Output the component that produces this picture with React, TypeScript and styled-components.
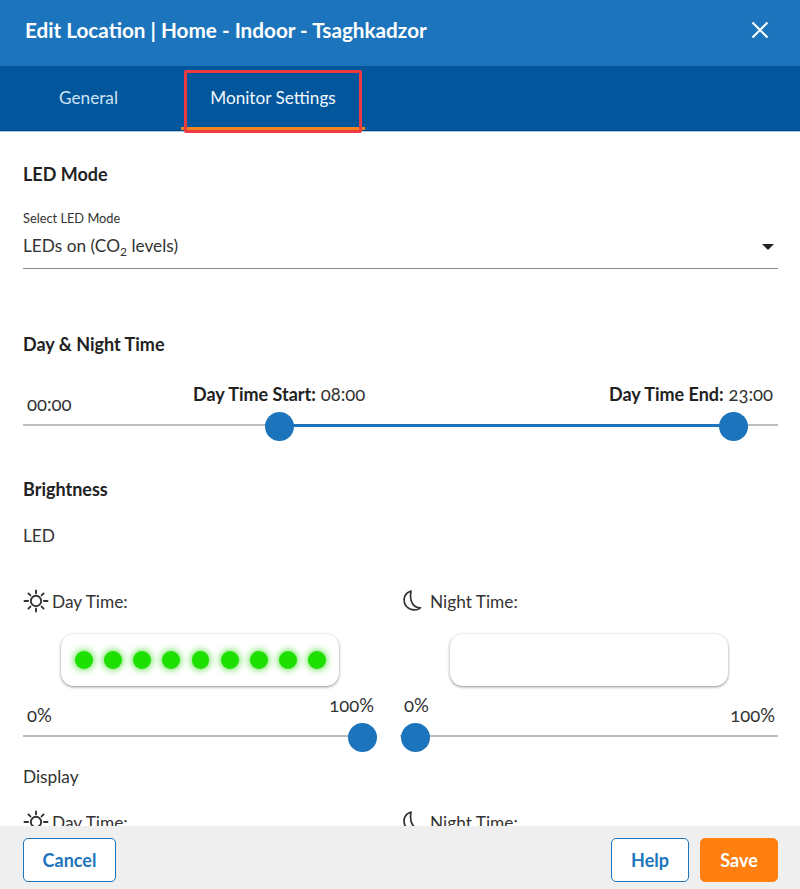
import React from "react";
import styled, { createGlobalStyle } from "styled-components";

const Global = createGlobalStyle`
  html, body { margin: 0; padding: 0; background: #fff; }
  body { font-family: "Lato", "Noto Sans", sans-serif; color: #222; }
  * { box-sizing: border-box; }
`;

const Page = styled.div`
  position: relative;
  width: 800px;
  height: 889px;
  display: flex;
  flex-direction: column;
  overflow: hidden;
`;
const Header = styled.header`
  flex: 0 0 66px;
  background: #1c75bc;
  color: #fff;
  display: flex;
  align-items: center;
  justify-content: space-between;
  padding: 0 31px 6px 25px;
`;
const Title = styled.h1`
  margin: 0;
  font-size: 20.7px;
  font-weight: 700;
`;
const Close = styled.button`
  display: flex;
  border: 0;
  padding: 0;
  background: none;
  color: #fff;
`;
const Tabs = styled.nav`
  flex: 0 0 65px;
  background: #02569b;
  display: flex;
  border-bottom: 1px solid #01437c;
  box-shadow: 0 1px 0 #a9cbe8;
  position: relative;
`;
const Tab = styled.div<{ $active?: boolean; $w: number }>`
  width: ${(p) => p.$w}px;
  display: flex;
  align-items: center;
  justify-content: center;
  color: ${(p) => (p.$active ? "#f2f8fd" : "#cfe3f3")};
  font-size: 17.2px;
  padding-top: 2px;
  border-bottom: 3px solid ${(p) => (p.$active ? "#f5821f" : "transparent")};
  margin-left: ${(p) => (p.$active ? "4px" : "0")};
`;
const Highlight = styled.div`
  position: absolute;
  left: 184px;
  top: 70px;
  width: 178px;
  height: 63px;
  border: 3px solid #ee3a43;
  border-radius: 2px;
`;
const Body = styled.main`
  flex: 1;
  min-height: 0;
  overflow: hidden;
  padding: 0 22px 0 23px;
`;
const Heading = styled.h2<{ $top: number; $bottom: number }>`
  margin: ${(p) => p.$top}px 0 ${(p) => p.$bottom}px;
  font-size: 18px;
  line-height: 22px;
  font-weight: 700;
  color: #222;
`;
const SelectLabel = styled.div`
  font-size: 12.8px;
  line-height: 16px;
  color: #333;
`;
const SelectBox = styled.div`
  height: 37px;
  margin-top: 6px;
  border-bottom: 1px solid #8c8c8c;
  display: flex;
  justify-content: space-between;
  padding: 2px 4px 0 0;
  font-size: 17.3px;
  line-height: 24px;
  color: #333;
  sub { font-size: 12px; line-height: 0; }
`;
const Arrow = styled.span`
  margin-top: 10px;
  width: 0;
  height: 0;
  border-left: 6px solid transparent;
  border-right: 6px solid transparent;
  border-top: 6px solid #222;
`;
const Slider = styled.div<{ $height: number }>`
  position: relative;
  height: ${(p) => p.$height}px;
`;
const Track = styled.div`
  position: absolute;
  left: 0;
  right: 0;
  bottom: 14px;
  height: 2px;
  background: #bdbdbd;
`;
const Fill = styled.div`
  position: absolute;
  bottom: 13px;
  height: 3px;
  background: #1c75bc;
`;
const Thumb = styled.div`
  position: absolute;
  bottom: -1px;
  width: 29px;
  height: 29px;
  border-radius: 50%;
  background: #1c75bc;
`;
const SliderLabel = styled.span<{ $up?: boolean }>`
  position: absolute;
  bottom: ${(p) => (p.$up ? 36 : 26)}px;
  font-size: 18.5px;
  line-height: 20px;
  color: #333;
  white-space: nowrap;
  font-variant-numeric: oldstyle-nums;
  b { font-size: 18px; font-weight: 700; color: #222; }
`;
const SubLabel = styled.div<{ $top: number; $bottom: number }>`
  margin: ${(p) => p.$top}px 0 ${(p) => p.$bottom}px;
  font-size: 17.3px;
  line-height: 22px;
  color: #333;
`;
const Columns = styled.div`
  display: grid;
  grid-template-columns: 354px 378px;
  column-gap: 23px;
`;
const Column = styled.div``;
const TimeLabel = styled.div<{ $gap: number }>`
  height: 26px;
  display: flex;
  align-items: center;
  gap: ${(p) => p.$gap}px;
  font-size: 17.3px;
  color: #333;
`;
const LedPanel = styled.div<{ $offset: number }>`
  width: 278px;
  height: 52px;
  margin: 20px 0 0 ${(p) => p.$offset}px;
  border-radius: 13px;
  background: #fff;
  box-shadow: 0 1px 3px rgba(0, 0, 0, 0.45);
  display: flex;
  align-items: center;
  gap: 11.2px;
  padding: 0 13px 0 14px;
`;
const Led = styled.span`
  width: 18px;
  height: 18px;
  border-radius: 50%;
  background: #1ee000;
  box-shadow: 0 0 7px 1px #5fe04a;
`;
const Footer = styled.footer`
  flex: 0 0 63px;
  background: #efefef;
  display: flex;
  align-items: flex-start;
  padding: 12px 22px 0 23px;
  gap: 11px;
`;
const Button = styled.button<{ $primary?: boolean; $w: number }>`
  width: ${(p) => p.$w}px;
  height: 44px;
  border-radius: 5px;
  border: 1px solid ${(p) => (p.$primary ? "#ff7f11" : "#1c75bc")};
  background: ${(p) => (p.$primary ? "#ff7f11" : "#fff")};
  color: ${(p) => (p.$primary ? "#fff" : "#1c75bc")};
  font: 700 18px "Lato", sans-serif;
`;
const Spacer = styled.div`
  flex: 1;
`;

const SunIcon = () => (
  <svg width="26" height="26" viewBox="0 0 26 26" fill="none" stroke="#333" strokeWidth="1.9" strokeLinecap="round">
    <circle cx="13" cy="13" r="5.2" />
    <path d="M13 2.500v2.800M13 20.700v2.800M1.500 13h3.600M20.900 13h3.600M5.400 5.400l2 2M18.600 18.600l2 2M5.400 20.600l2-2M18.600 7.400l2-2" />
  </svg>
);
const MoonIcon = () => (
  <svg width="24" height="26" viewBox="0 0 24 26" fill="none" stroke="#333" strokeWidth="1.7" strokeLinejoin="round">
    <path d="M11 3C5 5 3 10 4.500 15c1.500 5 7.500 8 13 6.500 1.500-.5 2.500-1 3-1.700C14 20 9 14.500 11 3z" />
  </svg>
);

const LedBlock = ({ night }: { night?: boolean }) => (
  <LedPanel $offset={night ? 50 : 38}>
    {!night && Array.from({ length: 9 }, (_, i) => <Led key={i} />)}
  </LedPanel>
);

export default function App() {
  return (
    <Page>
      <Global />
      <Header>
        <Title>Edit Location | Home - Indoor - Tsaghkadzor</Title>
        <Close aria-label="Close">
          <svg width="18" height="18" viewBox="0 0 18 18" stroke="currentColor" strokeWidth="2">
            <path d="M1.500 1.500l15 15M16.500 1.500l-15 15" />
          </svg>
        </Close>
      </Header>
      <Tabs>
        <Tab $w={177}>General</Tab>
        <Tab $w={184} $active>Monitor Settings</Tab>
      </Tabs>
      <Highlight />
      <Body>
        <Heading $top={32} $bottom={25}>LED Mode</Heading>
        <SelectLabel>Select LED Mode</SelectLabel>
        <SelectBox>
          <span>LEDs on (CO<sub>2</sub> levels)</span>
          <Arrow />
        </SelectBox>
        <Heading $top={64} $bottom={0}>Day &amp; Night Time</Heading>
        <Slider $height={85}>
          <Track />
          <Fill style={{ left: 256, width: 454 }} />
          <SliderLabel style={{ left: 4 }}>00:00</SliderLabel>
          <SliderLabel $up style={{ left: 170 }}><b>Day Time Start:</b> 08:00</SliderLabel>
          <SliderLabel $up style={{ right: 5 }}><b>Day Time End:</b> 23:00</SliderLabel>
          <Thumb style={{ left: 242 }} />
          <Thumb style={{ left: 696 }} />
        </Slider>
        <Heading $top={38} $bottom={25}>Brightness</Heading>
        <SubLabel $top={0} $bottom={41}>LED</SubLabel>
        <Columns>
          <Column>
            <TimeLabel $gap={3}><SunIcon /> Day Time:</TimeLabel>
            <LedBlock />
            <Slider $height={65}>
              <Track />
              <SliderLabel style={{ left: 4 }}>0%</SliderLabel>
              <SliderLabel $up style={{ right: 3 }}>100%</SliderLabel>
              <Thumb style={{ right: 0 }} />
            </Slider>
          </Column>
          <Column>
            <TimeLabel $gap={6}><MoonIcon /> Night Time:</TimeLabel>
            <LedBlock night />
            <Slider $height={65}>
              <Track />
              <SliderLabel $up style={{ left: 4 }}>0%</SliderLabel>
              <SliderLabel style={{ right: 3 }}>100%</SliderLabel>
              <Thumb style={{ left: 1 }} />
            </Slider>
          </Column>
        </Columns>
        <SubLabel $top={15} $bottom={21}>Display</SubLabel>
        <Columns>
          <Column><TimeLabel $gap={3}><SunIcon /> Day Time:</TimeLabel></Column>
          <Column><TimeLabel $gap={6}><MoonIcon /> Night Time:</TimeLabel></Column>
        </Columns>
      </Body>
      <Footer>
        <Button $w={93}>Cancel</Button>
        <Spacer />
        <Button $w={78}>Help</Button>
        <Button $w={78} $primary>Save</Button>
      </Footer>
    </Page>
  );
}
